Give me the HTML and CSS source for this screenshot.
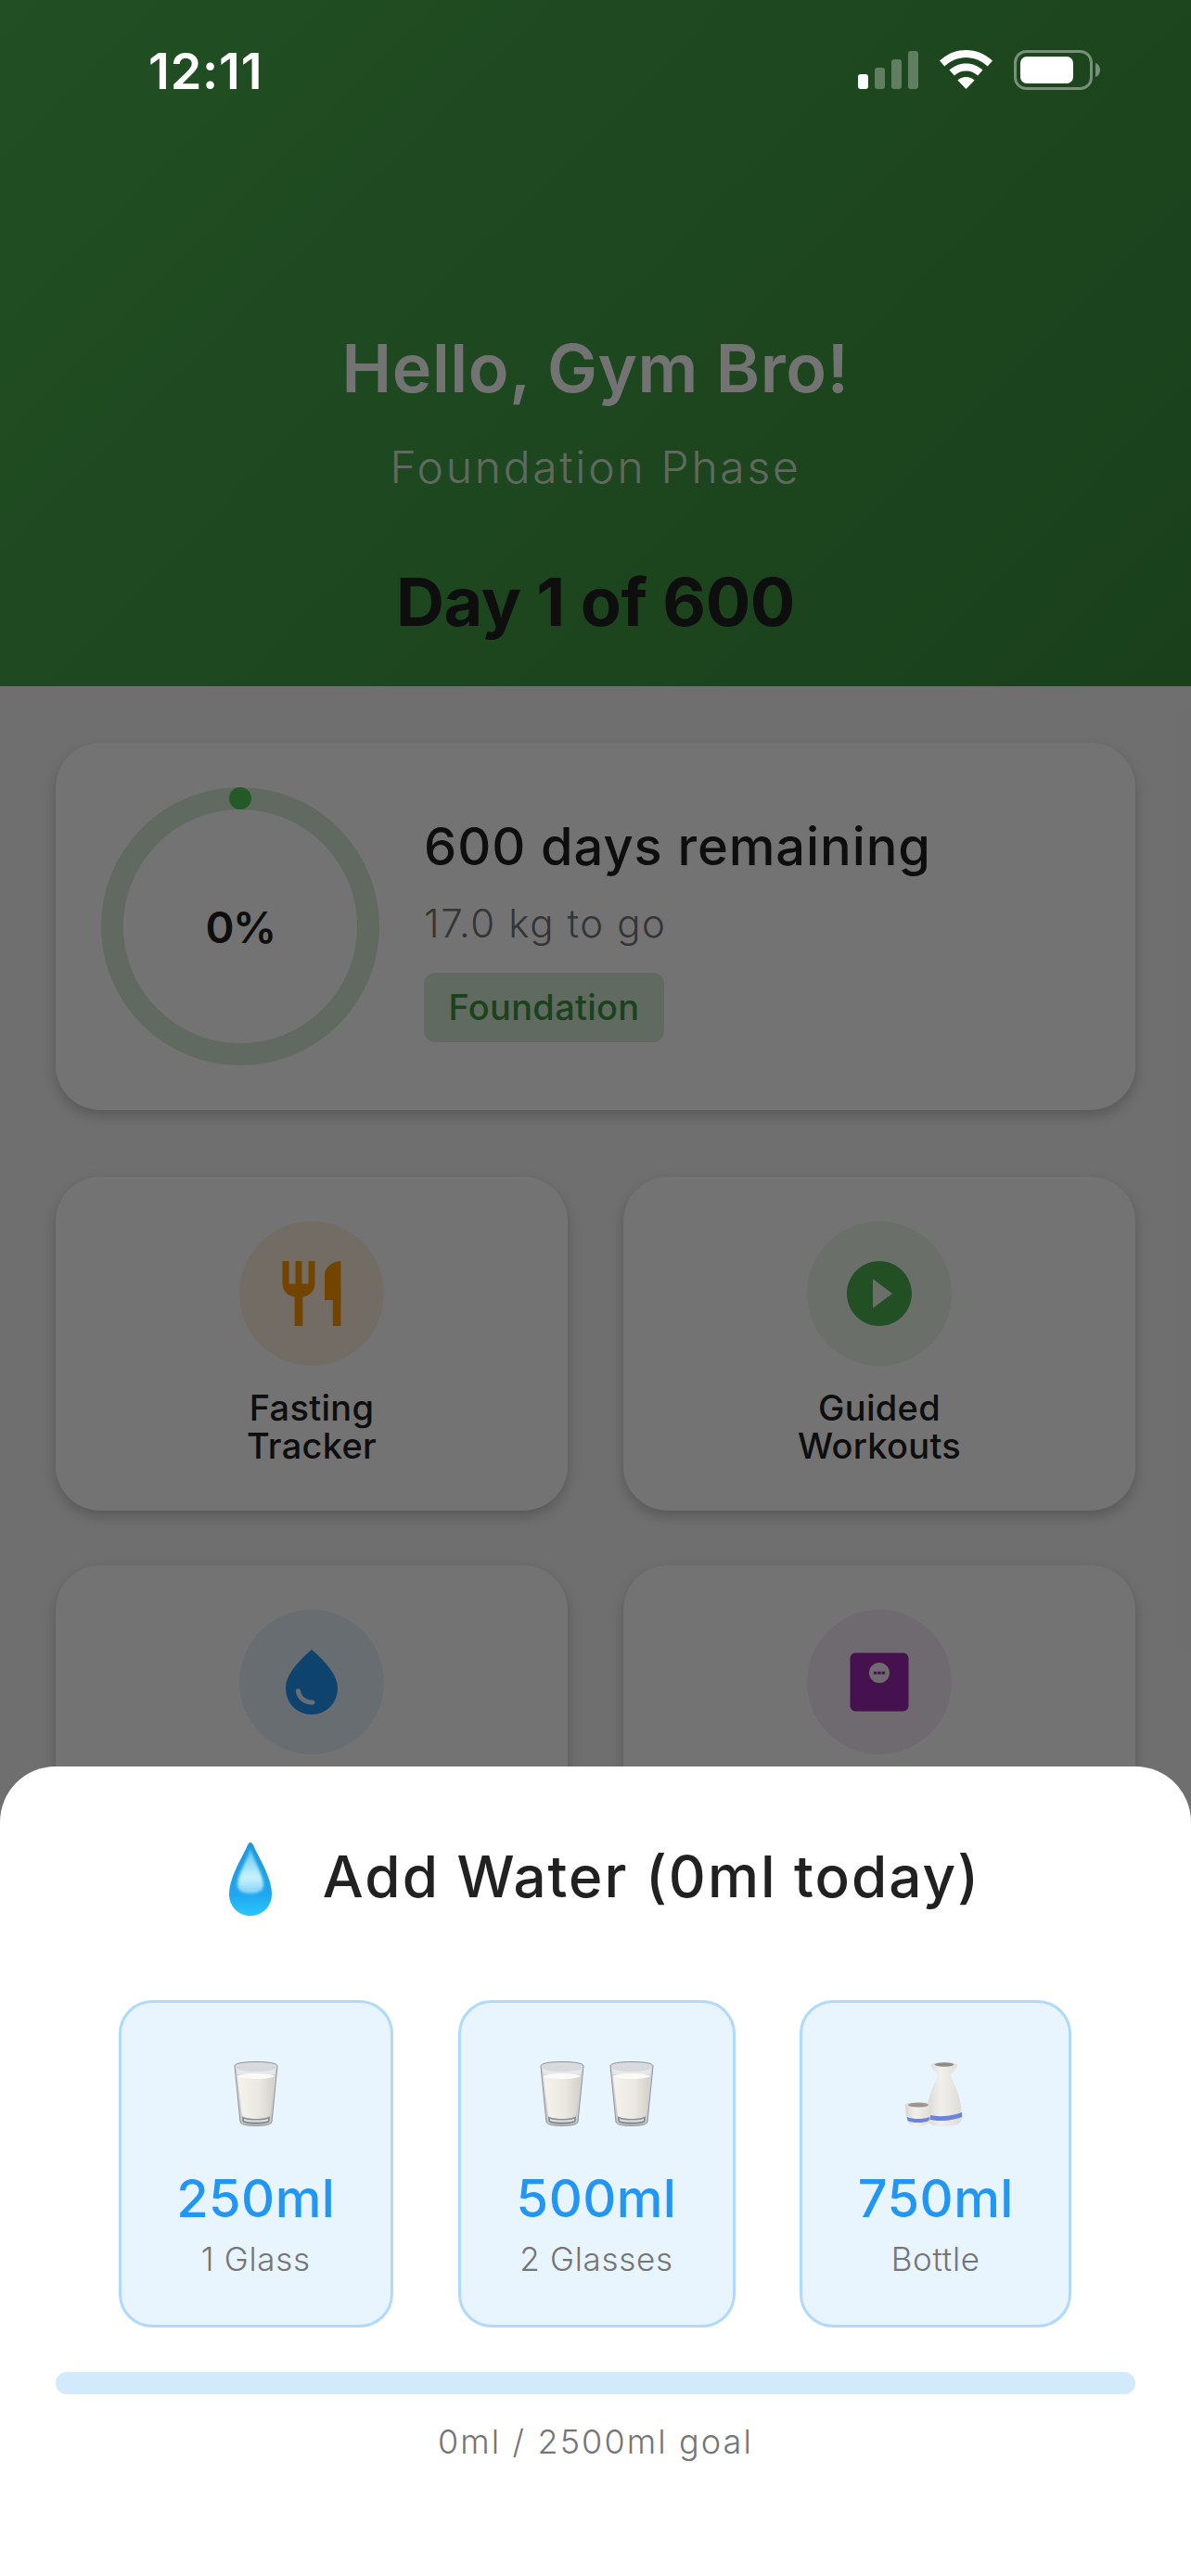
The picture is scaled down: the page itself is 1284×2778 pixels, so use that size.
FILE: index.html
```html
<!DOCTYPE html>
<html lang="en">
<head>
<meta charset="utf-8">
<title>Add Water</title>
<link rel="stylesheet" href="styles.css">
</head>
<body>
<div class="page">
  <header class="hero">
    <h1 class="hello">Hello, Gym Bro!</h1>
    <p class="phase">Foundation Phase</p>
    <p class="day">Day 1 of 600</p>
  </header>

  <main class="content">
    <section class="card progress-card">
      <div class="ring">
        <svg class="ring-svg" viewBox="0 0 300 300">
          <circle class="ring-track" cx="150" cy="150" r="138"/>
          <circle class="ring-dot" cx="150" cy="12" r="12"/>
        </svg>
        <span class="ring-label">0%</span>
      </div>
      <div class="progress-info">
        <div class="remain">600 days remaining</div>
        <div class="togo">17.0 kg to go</div>
        <span class="badge">Foundation</span>
      </div>
    </section>

    <section class="grid">
      <div class="card tile">
        <div class="disc disc-orange">
          <svg class="glyph" viewBox="0 0 24 24"><path class="fill-orange" d="M11 9H9V2H7v7H5V2H3v7c0 2.12 1.66 3.84 3.75 3.97V22h2.5v-9.03C11.34 12.84 13 11.12 13 9V2h-2v7zm5-3v8h2.5v8H21V2c-2.76 0-5 2.24-5 4z"/></svg>
        </div>
        <div class="tile-label">Fasting<br>Tracker</div>
      </div>
      <div class="card tile">
        <div class="disc disc-green">
          <svg class="glyph" viewBox="0 0 24 24"><path class="fill-green" d="M12 2C6.48 2 2 6.48 2 12s4.48 10 10 10 10-4.48 10-10S17.52 2 12 2zm-2 14.5v-9l6 4.5-6 4.5z"/></svg>
        </div>
        <div class="tile-label">Guided<br>Workouts</div>
      </div>
      <div class="card tile">
        <div class="disc disc-blue">
          <svg class="glyph" viewBox="0 0 24 24"><path class="fill-blue" fill-rule="evenodd" d="M12 2c-5.33 4.55-8 8.48-8 11.8 0 4.98 3.8 8.2 8 8.2s8-3.22 8-8.2C20 10.48 17.33 6.55 12 2zM7.83 14c.37 0 .67.26.74.62.41 2.22 2.28 2.98 3.64 2.87.43-.02.79.32.79.75 0 .4-.32.73-.72.75-2.13.13-4.62-1.09-5.19-4.12C7.01 14.42 7.37 14 7.83 14z"/></svg>
        </div>
      </div>
      <div class="card tile">
        <div class="disc disc-purple">
          <svg class="glyph" viewBox="0 0 24 24"><path class="fill-purple" fill-rule="evenodd" d="M4.700 3h14.600c.94 0 1.700.76 1.700 1.700v14.600c0 .94-.76 1.700-1.700 1.700H4.700C3.760 21 3 20.240 3 19.300V4.700C3 3.760 3.760 3 4.700 3zM12 6c-1.740 0-3.150 1.410-3.150 3.150S10.260 12.300 12 12.300s3.150-1.410 3.150-3.150S13.740 6 12 6z"/><rect class="fill-purple" x="10.250" y="8.750" width="1" height=".85"/><rect class="fill-purple" x="11.500" y="8.750" width="1" height=".85"/><rect class="fill-purple" x="12.750" y="8.750" width="1" height=".85"/></svg>
        </div>
      </div>
    </section>
  </main>

  <div class="scrim"></div>

  <div class="statusbar">
    <span class="time">12:11</span>
    <div class="status-icons">
      <svg class="signal" viewBox="0 0 65 41">
        <rect class="bar-on" x="0" y="25" width="11" height="16" rx="3"/>
        <rect class="bar-off" x="18" y="18" width="11" height="23" rx="3"/>
        <rect class="bar-off" x="36" y="9" width="11" height="32" rx="3"/>
        <rect class="bar-off" x="54" y="0" width="11" height="41" rx="3"/>
      </svg>
      <svg class="wifi" viewBox="0 0 57 42">
        <path class="bar-on" d="M28.500 0C17.500 0 7.600 4.300 0 11.500L5.300 17.500C11.500 11.600 19.600 8 28.500 8s17 3.600 23.200 9.500L57 11.500C49.400 4.300 39.500 0 28.500 0z"/>
        <path class="bar-on" d="M28.500 14.500c-7 0-13.300 2.700-18 7.100l5.400 6c3.300-3.100 7.700-5 12.600-5s9.300 1.900 12.600 5l5.400-6c-4.700-4.400-11-7.100-18-7.100z"/>
        <path class="bar-on" d="M28.500 29c-3.500 0-6.700 1.300-9.100 3.500L28.500 42l9.100-9.500C35.200 30.300 32 29 28.500 29z"/>
      </svg>
      <svg class="battery" viewBox="0 0 93 43">
        <rect class="batt-frame" x="1.500" y="1.500" width="82" height="40" rx="12"/>
        <rect class="bar-on" x="7" y="7" width="57" height="29" rx="7"/>
        <path class="batt-nub" d="M88 14c3 .8 5 3.800 5 7.500S91 28.200 88 29z"/>
      </svg>
    </div>
  </div>

  <aside class="sheet">
    <div class="sheet-title">
      <svg class="drop" viewBox="0 0 46 79">
        <defs>
          <linearGradient id="dropBody" x1="0" y1="0" x2="0" y2="1">
            <stop offset="0" stop-color="#1a98dc"/>
            <stop offset=".7" stop-color="#1fa6ee"/>
            <stop offset="1" stop-color="#2cc6fc"/>
          </linearGradient>
          <linearGradient id="dropShine" x1="0" y1="0" x2="0" y2="1">
            <stop offset="0" stop-color="#5fc2f0"/>
            <stop offset=".65" stop-color="#c9f3fe"/>
            <stop offset="1" stop-color="#7ed0f7"/>
          </linearGradient>
          <filter id="soft" x="-20%" y="-20%" width="140%" height="140%">
            <feGaussianBlur stdDeviation="1.800"/>
          </filter>
        </defs>
        <path fill="url(#dropBody)" d="M23 0c1.500 0 2.500 1.500 3.500 3.800C31 15 46 37 46 55.500 46 69 36 79 23 79S0 69 0 55.500C0 37 15 15 19.500 3.800 20.500 1.500 21.500 0 23 0z"/>
        <path fill="url(#dropShine)" filter="url(#soft)" d="M23 6c2.500 12 14 28 14 40 0 6-6 9-14 9S9 52 9 46C9 34 20.500 18 23 6z"/>
      </svg>
      <span class="sheet-heading">Add Water (0ml today)</span>
    </div>

    <div class="options">
      <div class="option option-a">
        <div class="art">
          <svg class="glass" viewBox="0 0 48 70"><use href="#milk"/></svg>
        </div>
        <div class="amount">250ml</div>
        <div class="unit">1 Glass</div>
      </div>
      <div class="option option-b">
        <div class="art art-pair">
          <svg class="glass" viewBox="0 0 48 70">
            <defs>
              <linearGradient id="milkBody" x1="0" y1="0" x2="1" y2="0">
                <stop offset="0" stop-color="#f5f3ec"/>
                <stop offset=".6" stop-color="#e9e7df"/>
                <stop offset="1" stop-color="#d2d0c8"/>
              </linearGradient>
              <linearGradient id="glassRim" x1="0" y1="0" x2="0" y2="1">
                <stop offset="0" stop-color="#d9dbde"/>
                <stop offset="1" stop-color="#c5cacd"/>
              </linearGradient>
              <g id="milk">
                <path fill="url(#glassRim)" stroke="#8d9296" stroke-width="1" d="M1 5C1 2 11 .5 24 .5S47 2 47 5l-6 60c0 3-7 4.500-17 4.500S7 68 7 65z"/>
                <path fill="#e9edf0" d="M3 7c0 2 9 4 21 4s21-2 21-4l-1 7H4z" opacity=".75"/>
                <path fill="url(#milkBody)" d="M4 16c0 0 6-3 20-3s20 3 20 3l-5 43c0 2-6 3-15 3s-15-1-15-3z"/>
                <path fill="#fbfaf6" d="M4 16c3-2 10-3 20-3s17 1 20 3c-3 2-10 3-20 3S7 18 4 16z"/>
                <path fill="#8b8f92" d="M9 59c2 2 8 3 15 3s13-1 15-3l-.4 6c-1.600 2-7.600 3-14.600 3s-13-1-14.600-3z"/>
                <path fill="#dfe2e4" d="M11 62c3 1 8 1.500 13 1.500s10-.5 13-1.500v2c-3 1-8 1.500-13 1.500S14 65 11 64z"/>
              </g>
            </defs>
            <use href="#milk"/>
          </svg>
          <svg class="glass" viewBox="0 0 48 70"><use href="#milk"/></svg>
        </div>
        <div class="amount">500ml</div>
        <div class="unit">2 Glasses</div>
      </div>
      <div class="option option-c">
        <div class="art">
          <svg class="sake" viewBox="0 0 62 71">
            <defs>
              <linearGradient id="sakeBody" x1="0" y1="0" x2="1" y2="0">
                <stop offset="0" stop-color="#d8d7d2"/>
                <stop offset=".4" stop-color="#f1f0ec"/>
                <stop offset="1" stop-color="#dedcd7"/>
              </linearGradient>
            </defs>
            <path fill="url(#sakeBody)" d="M28 4c0-2 7-4 14-4s14 2 14 4c0 5-6 7-7 11 0 4 12 20 12 45 0 6-3 10-19 10s-19-4-19-10c0-25 12-41 12-45-1-4-7-6-7-11z"/>
            <ellipse fill="#8f8a83" cx="42" cy="3.500" rx="10.500" ry="2.200"/>
            <path fill="#6a84dc" d="M23 57c6 1.800 13 2.500 19 2 8-.5 13-2 19-4 .1 1.600.1 3.400.1 5-6 2-12 3.500-19 4-7 .4-13-.4-19-2.300z"/>
            <path fill="url(#sakeBody)" d="M0 47c0-2 7-3.500 14-3.500S28 45 28 47c0 8-1 14-3 19-1 2-5 4-11 4s-9-2-11-4C1 61 0 55 0 47z"/>
            <ellipse fill="#9a958e" cx="14" cy="47" rx="11" ry="2.400"/>
            <path fill="#6a84dc" d="M1.800 60c4 1.600 8 2 12.200 2s8-.4 12.200-2l-.8 4c-3 1.500-7.400 2-11.400 2s-8.400-.5-11.400-2z"/>
          </svg>
        </div>
        <div class="amount">750ml</div>
        <div class="unit">Bottle</div>
      </div>
    </div>

    <div class="meter"></div>
    <div class="meter-text">0ml / 2500ml goal</div>
  </aside>
</div>
</body>
</html>
```
FILE: styles.css
```css
* { box-sizing: border-box; }
html, body { margin: 0; padding: 0; }
body { font-family: Inter, "Liberation Sans", sans-serif; background: #f5f5f5; }

.page {
  position: relative;
  width: 1284px;
  height: 2778px;
  overflow: hidden;
  background: #f5f5f5;
}

.hero {
  height: 740px;
  padding-top: 352px;
  background: linear-gradient(135deg, #4caf50, #388e3c);
  text-align: center;
}
.hello { margin: 0; font-size: 72px; line-height: 90px; font-weight: 600; color: #fff; letter-spacing: .6px; }
.phase { margin: 33px 0 0; font-size: 48px; line-height: 58px; font-weight: 300; color: rgba(255,255,255,.8); letter-spacing: 2.7px; }
.day { margin: 71px 0 0; font-size: 72px; line-height: 90px; font-weight: 700; color: #212121; letter-spacing: -.4px; }

.content { padding: 61px 60px 0; }
.card {
  background: #fff;
  border-radius: 48px;
  box-shadow: 0 6px 14px rgba(0,0,0,.2);
}
.progress-card {
  height: 396px;
  padding: 48px 49px;
  display: flex;
  align-items: center;
  gap: 48px;
}
.ring { position: relative; width: 300px; height: 300px; flex: none; }
.ring-svg { display: block; width: 300px; height: 300px; }
.ring-track { fill: none; stroke: #d5ecd6; stroke-width: 24; }
.ring-dot { fill: #50c857; }
.ring-label {
  position: absolute; inset: 0;
  display: flex; align-items: center; justify-content: center;
  font-size: 47px; font-weight: 600; color: #212121; letter-spacing: -1.5px;
}
.progress-info { display: flex; flex-direction: column; align-items: flex-start; }
.remain { font-size: 56px; line-height: 76px; font-weight: 550; color: #212121; letter-spacing: .9px; }
.togo { margin-top: 18px; font-size: 42px; line-height: 54px; font-weight: 300; color: #757575; letter-spacing: 1.6px; }
.badge {
  margin-top: 26px;
  height: 75px;
  width: 259px;
  display: flex; align-items: center; justify-content: center;
  border-radius: 12px;
  background: #d5ecd6;
  color: #3a9440;
  font-size: 38px;
  font-weight: 500;
  letter-spacing: .3px;
}

.grid { margin-top: 72px; display: grid; grid-template-columns: 552px 552px; gap: 59px 60px; }
.tile { height: 360px; padding-top: 48px; display: flex; flex-direction: column; align-items: center; }
.disc { width: 156px; height: 156px; border-radius: 50%; display: flex; align-items: center; justify-content: center; }
.disc-orange { background: #fff0e0; }
.disc-green { background: #ecf6ec; }
.disc-blue { background: #e6f2fc; }
.disc-purple { background: #f5eaf7; }
.glyph { width: 84px; height: 84px; display: block; }
.fill-orange { fill: #ff9800; }
.fill-green { fill: #4caf50; }
.fill-blue { fill: #2196f3; }
.fill-purple { fill: #9c27b0; }
.tile-label { margin-top: 25px; text-align: center; font-size: 38px; line-height: 41px; font-weight: 500; color: #212121; letter-spacing: .3px; }

.scrim { position: absolute; inset: 0; background: rgba(0,0,0,.55); }

.statusbar { position: absolute; left: 0; top: 0; width: 100%; height: 110px; }
.time { position: absolute; left: 160px; top: 47px; font-size: 54px; line-height: 60px; font-weight: 600; color: #fff; letter-spacing: .8px; }
.status-icons { position: absolute; left: 925px; top: 54px; display: flex; align-items: flex-start; gap: 23px; }
.signal { width: 65px; height: 41px; display: block; margin-top: 1px; }
.wifi { width: 57px; height: 42px; display: block; }
.battery { width: 93px; height: 43px; display: block; }
.bar-on { fill: #fff; }
.bar-off { fill: rgba(255,255,255,.3); }
.batt-frame { fill: none; stroke: rgba(255,255,255,.4); stroke-width: 3; }
.batt-nub { fill: rgba(255,255,255,.4); }

.sheet {
  position: absolute;
  left: 0; right: 0; bottom: 0;
  height: 873px;
  padding: 82px 60px 0;
  background: #fff;
  border-radius: 60px 60px 0 0;
}
.sheet-title { display: flex; align-items: center; justify-content: center; gap: 55px; height: 79px; padding-left: 20px; }
.drop { width: 46px; height: 79px; display: block; flex: none; }
.sheet-heading { font-size: 62px; line-height: 79px; font-weight: 500; color: #212121; letter-spacing: 2px; margin-bottom: 6px; }

.options { margin: 91px -1px 0 -2px; display: flex; justify-content: space-evenly; }
.option {
  height: 353px;
  padding-top: 63px;
  display: flex; flex-direction: column; align-items: center;
  background: #e8f4fe;
  border: 3px solid #afdafb;
  border-radius: 36px;
}
.option-a { width: 296px; }
.option-b { width: 299px; }
.option-c { width: 293px; }
.art { height: 70px; display: flex; justify-content: center; gap: 27px; }
.glass { width: 48px; height: 70px; display: block; }
.sake { width: 62px; height: 71px; display: block; margin-right: 4px; }
.amount { margin-top: 40px; font-size: 56px; line-height: 76px; font-weight: 550; color: #2196f3; letter-spacing: .4px; }
.unit { margin-top: 5px; font-size: 35px; line-height: 44px; font-weight: 300; color: #757575; letter-spacing: .7px; }

.meter { margin-top: 48px; height: 24px; border-radius: 12px; background: #d3e9fc; }
.meter-text { margin-top: 28px; text-align: center; font-size: 36px; line-height: 46px; font-weight: 300; color: #757575; letter-spacing: 2.1px; }
```
